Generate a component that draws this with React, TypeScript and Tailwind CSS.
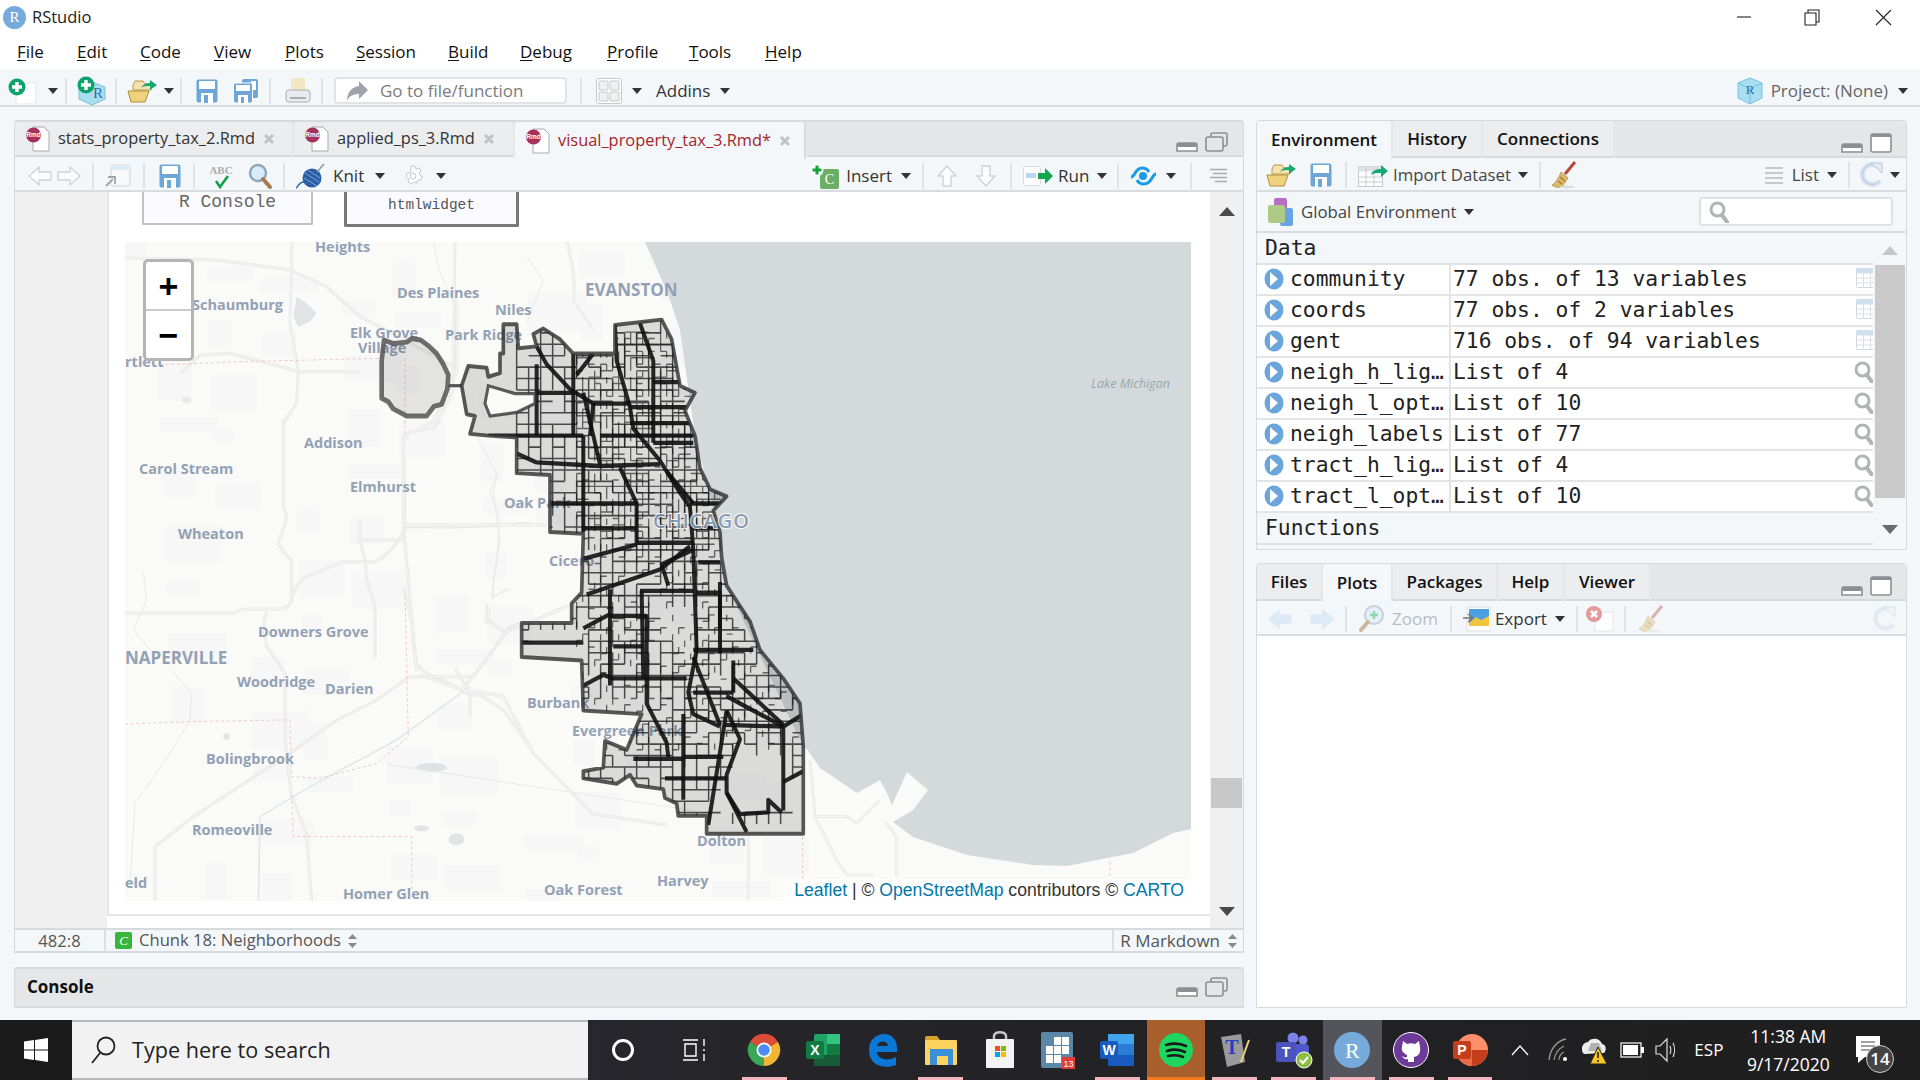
import { Fragment, type ReactNode } from "react";

const menus = [
  ["F", "ile", "w-[60px]"],
  ["E", "dit", "w-[63px]"],
  ["C", "ode", "w-[74px]"],
  ["V", "iew", "w-[71px]"],
  ["P", "lots", "w-[71px]"],
  ["S", "ession", "w-[92px]"],
  ["B", "uild", "w-[72px]"],
  ["D", "ebug", "w-[87px]"],
  ["P", "rofile", "w-[82px]"],
  ["T", "ools", "w-[76px]"],
  ["H", "elp", "w-[60px]"],
];

const envRows = [
  ["community", "77 obs. of 13 variables", "grid"],
  ["coords", "77 obs. of 2 variables", "grid"],
  ["gent", "716 obs. of 94 variables", "grid"],
  ["neigh_h_lig…", "List of 4", "find"],
  ["neigh_l_opt…", "List of 10", "find"],
  ["neigh_labels", "List of 77", "find"],
  ["tract_h_lig…", "List of 4", "find"],
  ["tract_l_opt…", "List of 10", "find"],
];

const Caret = ({ className = "" }: { className?: string }) => (
  <svg width="10" height="6" viewBox="0 0 10 6" className={className}>
    <path d="M0 0h10L5 6z" fill="#333" />
  </svg>
);

const Sep = ({ className = "" }: { className?: string }) => <div className={`w-[2px] h-[26px] bg-[#dfe3e6] ${className}`} />;

const Save = ({ className = "" }: { className?: string }) => (
  <svg width="22" height="24" viewBox="0 0 22 24" className={className}>
    <rect x="0.5" y="0.5" width="21" height="23" rx="2" fill="#6ea6d8" />
    <rect x="3" y="2" width="16" height="8" fill="#fff" />
    <rect x="5" y="14" width="12" height="10" fill="#fff" />
    <rect x="8" y="16" width="4" height="8" fill="#6ea6d8" />
  </svg>
);

const SaveAll = () => (
  <svg width="26" height="26" viewBox="0 0 26 26">
    <rect x="9" y="1" width="16" height="19" rx="2" fill="#6ea6d8" />
    <rect x="18" y="3" width="5" height="9" fill="#fff" />
    <rect x="0.5" y="5" width="19" height="20" rx="2" fill="#6ea6d8" stroke="#fff" />
    <rect x="3" y="7" width="14" height="6" fill="#fff" />
    <rect x="5" y="17" width="10" height="8" fill="#fff" />
    <rect x="8" y="19" width="3" height="6" fill="#6ea6d8" />
  </svg>
);

const Folder = ({ className = "" }: { className?: string }) => (
  <svg width="32" height="24" viewBox="0 0 32 24" className={className}>
    <path d="M6 6l2-4h8l2 3h6v6H6z" fill="#f4e3ac" stroke="#b69a4c" />
    <path d="M1 12h21l-4 11H4z" fill="#f0d27d" stroke="#b08d3a" />
    <path d="M14 9c2-4 6-5 9-5V1l7 5-7 5V7c-4 0-7 0-9 2z" fill="#19a974" />
  </svg>
);

const Broom = ({ dim = false }: { dim?: boolean }) => (
  <svg width="26" height="28" viewBox="0 0 26 28" opacity={dim ? 0.4 : 1}>
    <path d="M24 1L14 13" stroke="#b5483a" strokeWidth="3" />
    <path d="M10 11l7 6-6 9c-4 1-8 0-10-2 4-2 7-8 9-13z" fill="#dcb96a" stroke="#ad8b3f" strokeWidth="0.7" />
    <path d="M9 16l5 4M7 20l4 3" stroke="#a67c2c" strokeWidth="1.4" />
    <ellipse cx="16" cy="26" rx="8" ry="1.4" fill="#ddd" />
  </svg>
);

const Refresh = ({ dim = false }: { dim?: boolean }) => (
  <svg width="23" height="26" viewBox="0 0 23 26" opacity={dim ? 0.45 : 1}>
    <path d="M19 5A10 10 0 1 0 20 19" fill="none" stroke="#d6e2f1" strokeWidth="5" />
    <path d="M19 5A10 10 0 1 0 20 19" fill="none" stroke="#b7c9de" strokeWidth="1" />
    <path d="M11 1h11v10z" fill="#e4edf7" stroke="#b7c9de" />
  </svg>
);

const PaneIcons = ({ restore = false }: { restore?: boolean }) => (
  <div className="flex items-end gap-[7px]">
    <svg width="22" height="10" viewBox="0 0 22 10">
      <path d="M3 1h16a2 2 0 0 1 2 2v6H1V3a2 2 0 0 1 2-2z" fill="#fff" stroke="#8b8f93" strokeWidth="1.6" />
      <rect x="1" y="1" width="20" height="4" rx="2" fill="#8b8f93" />
    </svg>
    {restore ? (
      <svg width="23" height="20" viewBox="0 0 23 20">
        <rect x="6" y="1" width="16" height="13" rx="2" fill="none" stroke="#8b8f93" strokeWidth="1.6" />
        <rect x="1" y="5" width="17" height="14" rx="2" fill="#e4e6e8" stroke="#8b8f93" strokeWidth="1.6" />
      </svg>
    ) : (
      <svg width="22" height="20" viewBox="0 0 22 20">
        <rect x="1" y="1" width="20" height="18" rx="2" fill="#fff" stroke="#8b8f93" strokeWidth="1.6" />
        <rect x="1" y="1" width="20" height="3" fill="#8b8f93" />
      </svg>
    )}
  </div>
);

const RmdIcon = () => (
  <svg width="24" height="26" viewBox="0 0 24 26" className="shrink-0">
    <path d="M7 1h11l5 5v19H7z" fill="#fff" stroke="#aaa" />
    <circle cx="7.5" cy="9" r="7.5" fill="#a5315c" />
    <text x="7.5" y="11" fontSize="6.5" fontWeight="700" fill="#fff" textAnchor="middle" fontFamily="Liberation Sans">Rmd</text>
  </svg>
);

const TabClose = () => (
  <svg width="12" height="12" viewBox="0 0 12 12" className="shrink-0">
    <path d="M2 2l8 8M10 2l-8 8" stroke="#bfc3c6" strokeWidth="3" />
  </svg>
);

const ArrowH = ({ left = false, blue = false }: { left?: boolean; blue?: boolean }) => (
  <svg width="24" height="22" viewBox="0 0 24 22">
    <path
      d={left ? "M1 11L11 2v5h12v8H11v5z" : "M23 11L13 2v5H1v8h12v5z"}
      fill={blue ? "#dbeaf6" : "#fbfcfc"}
      stroke={blue ? "#dbeaf6" : "#cfd3d6"}
      strokeWidth="1.4"
    />
  </svg>
);

const ArrowV = ({ down = false }: { down?: boolean }) => (
  <svg width="20" height="22" viewBox="0 0 20 22">
    <path d={down ? "M10 21L1 11h5V1h8v10h5z" : "M10 1L1 11h5v10h8V11h5z"} fill="#fbfcfc" stroke="#cfd3d6" strokeWidth="1.4" />
  </svg>
);

const Search = ({ className = "" }: { className?: string }) => (
  <svg width="24" height="26" viewBox="0 0 24 26" className={className}>
    <circle cx="10" cy="10" r="8" fill="#d9ebfa" stroke="#8fa7ba" strokeWidth="2.5" />
    <path d="M15 16l7 8" stroke="#a87b4f" strokeWidth="4" strokeLinecap="round" />
  </svg>
);

const GreySearch = ({ className = "" }: { className?: string }) => (
  <svg width="20" height="22" viewBox="0 0 20 22" className={className}>
    <circle cx="8.5" cy="8.5" r="6.5" fill="#fff" stroke="#b1b5b8" strokeWidth="3" />
    <path d="M13 14l5 7" stroke="#b1b5b8" strokeWidth="4" strokeLinecap="round" />
  </svg>
);

const GridIcon = () => (
  <svg width="23" height="21" viewBox="0 0 23 21">
    <rect x="0.5" y="0.5" width="21" height="19" rx="1" fill="#fff" stroke="#cfd6dc" />
    <rect x="0.5" y="0.5" width="21" height="5" fill="#cfe0ef" />
    <path d="M0 10h22M0 15h22M7.5 5v15M14.5 5v15" stroke="#dae0e5" />
  </svg>
);

const MainToolbar = () => (
  <div className="h-[38px] shrink-0 flex items-center pt-[7px] bg-[#f4f7f9] border-b-2 border-[#d9dcdf]">
    <svg width="30" height="26" viewBox="0 0 30 26" className="ml-[8px]">
      <rect x="8" y="5" width="20" height="21" fill="#fff" stroke="#e3e5e7" />
      <circle cx="9" cy="9" r="8.5" fill="#0da26b" />
      <path d="M4 9h10M9 4v10" stroke="#fff" strokeWidth="3.4" />
    </svg>
    <Caret className="ml-[10px]" />
    <Sep className="ml-[7px]" />
    <svg width="32" height="30" viewBox="0 0 32 30" className="ml-[9px]">
      <path d="M16 6l13 5v12l-13 6-13-6V11z" fill="#a9ddf0" stroke="#77c2de" />
      <text x="17" y="22" fontSize="15" fill="#2b70a8" fontFamily="Liberation Serif">R</text>
      <circle cx="10" cy="9" r="8.5" fill="#0da26b" />
      <path d="M5 9h10M10 4v10" stroke="#fff" strokeWidth="3.4" />
    </svg>
    <Sep className="ml-[7px]" />
    <Folder className="ml-[10px]" />
    <Caret className="ml-[5px]" />
    <Sep className="ml-[6px]" />
    <Save className="ml-[14px]" />
    <div className="ml-[15px]"><SaveAll /></div>
    <Sep className="ml-[10px]" />
    <svg width="26" height="26" viewBox="0 0 26 26" className="ml-[14px]">
      <rect x="6" y="0" width="14" height="14" fill="#f1e7c3" />
      <rect x="1" y="12" width="24" height="12" rx="3" fill="#e9ecee" stroke="#a9adb0" />
      <rect x="5" y="19" width="16" height="2" fill="#a9adb0" />
    </svg>
    <Sep className="ml-[10px]" />
    <div className="ml-[11px] w-[233px] h-[27px] bg-white border-2 border-[#e1e4e6] rounded-[4px] flex items-center">
      <svg width="22" height="22" viewBox="0 0 22 22" className="ml-[10px]">
        <path d="M13 1l9 9-9 9v-5C7 14 3 16 1 21 1 12 6 7 13 6z" fill="#9ea3ad" />
      </svg>
      <span className="ml-[12px] text-[17px] text-[#7b7b7b]">Go to file/function</span>
    </div>
    <Sep className="ml-[13px]" />
    <svg width="26" height="26" viewBox="0 0 26 26" className="ml-[14px]">
      <rect x="0.5" y="0.5" width="25" height="25" rx="2" fill="#fff" stroke="#c5c9cc" />
      <rect x="3" y="3" width="9" height="9" rx="1" fill="#eef0f1" stroke="#c5c9cc" />
      <rect x="14" y="3" width="9" height="9" rx="1" fill="#eef0f1" stroke="#c5c9cc" />
      <rect x="3" y="14" width="9" height="9" rx="1" fill="#eef0f1" stroke="#c5c9cc" />
      <rect x="14" y="14" width="9" height="9" rx="1" fill="#eef0f1" stroke="#c5c9cc" />
    </svg>
    <Caret className="ml-[10px]" />
    <span className="ml-[14px] text-[17px] text-[#333]">Addins</span>
    <Caret className="ml-[10px]" />
    <div className="ml-auto flex items-center mr-[12px]">
      <svg width="26" height="28" viewBox="0 0 26 28">
        <path d="M13 1l12 5v15l-12 6-12-6V6z" fill="#a9ddf0" stroke="#77c2de" />
        <path d="M1 6l12 6 12-6M13 12v15" stroke="#77c2de" fill="none" />
        <text x="13" y="17" fontSize="13" fill="#2b70a8" textAnchor="middle" fontFamily="Liberation Serif">R</text>
      </svg>
      <span className="ml-[8px] text-[17px] text-[#666]">Project: (None)</span>
      <Caret className="ml-[10px]" />
    </div>
  </div>
);

const editorTabs = [
  { name: "stats_property_tax_2.Rmd", width: "w-[277px]" },
  { name: "applied_ps_3.Rmd", width: "w-[219px]" },
  { name: "visual_property_tax_3.Rmd*", width: "w-[291px]", active: true },
];

const EditorTabs = () => (
  <div className="h-[37px] shrink-0 flex bg-[#e4e6e8] rounded-t-[4px] border-t-2 border-x border-[#d7dadd] relative">
    {editorTabs.map((t) => (
      <div
        key={t.name}
        className={`${t.width} flex items-center pl-[11px] mr-[2px] rounded-t-[3px] ${t.active ? "bg-[#f4f7f9] h-[37px] border-r-2 border-[#d7dadd]" : "bg-[#ebedef] border-b-2 border-[#d7dadd]"}`}
      >
        <RmdIcon />
        <span className={`ml-[8px] text-[16.4px] ${t.active ? "text-[#a4232b]" : "text-[#333]"}`}>{t.name}</span>
        <span className="ml-[8px]"><TabClose /></span>
      </div>
    ))}
    <div className="flex-1 flex justify-end items-end pb-[3px] pr-[15px] border-b-2 border-[#d7dadd]">
      <PaneIcons restore />
    </div>
  </div>
);

const EditorToolbar = () => (
  <div className="h-[35px] shrink-0 flex items-center pt-[4px] bg-[#f4f7f9] border-x border-[#d7dadd] border-b-2 border-b-[#d9dcdf]">
    <div className="ml-[13px]"><ArrowH left /></div>
    <div className="ml-[5px]"><ArrowH /></div>
    <Sep className="ml-[11px]" />
    <svg width="26" height="24" viewBox="0 0 26 24" className="ml-[11px]">
      <rect x="6" y="1" width="19" height="21" rx="2" fill="#f6f8fa" stroke="#d0d4d7" />
      <rect x="6" y="1" width="19" height="5" fill="#e0ebf5" />
      <path d="M1 22l7-7M3 13h7v7" fill="#fff" stroke="#9ea3a7" strokeWidth="1.8" />
    </svg>
    <Sep className="ml-[12px]" />
    <Save className="ml-[14px]" />
    <Sep className="ml-[12px]" />
    <svg width="28" height="26" viewBox="0 0 28 26" className="ml-[12px]">
      <text x="14" y="11" fontSize="11" fontWeight="700" textAnchor="middle" fill="#a9adb0" fontFamily="Liberation Serif">ABC</text>
      <path d="M9 18l4 6 8-11" fill="none" stroke="#14a04a" strokeWidth="2.6" />
    </svg>
    <Search className="ml-[13px]" />
    <Sep className="ml-[11px]" />
    <svg width="32" height="26" viewBox="0 0 32 26" className="ml-[10px]">
      <circle cx="17" cy="15" r="9.5" fill="#2a5fa6" />
      <path d="M10 10l14 9M9 15l13 8M13 7l12 8" stroke="#7fa6d9" strokeWidth="1" />
      <path d="M22 9l7-8" stroke="#999" strokeWidth="1.6" />
      <path d="M9 19c-6 0-6 6-8 6" fill="none" stroke="#2a5fa6" strokeWidth="1.3" />
    </svg>
    <span className="ml-[6px] text-[17px] text-[#333]">Knit</span>
    <Caret className="ml-[11px]" />
    <svg width="22" height="22" viewBox="0 0 22 22" className="ml-[17px]">
      <path d="M9 1h4l1 3 3-1 2 3-2 3 3 2-1 4h-3l-1 3-3-1-3 2-3-2 1-3-3-2 1-4h3l1-3z" fill="#fff" stroke="#c4c8cb" />
      <circle cx="11" cy="11" r="3" fill="#fff" stroke="#c4c8cb" />
    </svg>
    <Caret className="ml-[12px]" />
    <svg width="30" height="26" viewBox="0 0 30 26" className="ml-[364px]">
      <rect x="10" y="6" width="19" height="20" rx="2" fill="#6cae64" />
      <text x="19.5" y="21" fontSize="14" fill="#fff" textAnchor="middle" fontFamily="Liberation Serif">C</text>
      <circle cx="7" cy="7" r="6.5" fill="#fff" />
      <path d="M2.5 7h9M7 2.5v9" stroke="#13a538" strokeWidth="3" />
    </svg>
    <span className="ml-[6px] text-[17px] text-[#333]">Insert</span>
    <Caret className="ml-[9px]" />
    <Sep className="ml-[11px]" />
    <div className="ml-[13px]"><ArrowV /></div>
    <div className="ml-[19px]"><ArrowV down /></div>
    <Sep className="ml-[14px]" />
    <svg width="30" height="22" viewBox="0 0 30 22" className="ml-[11px]">
      <rect x="0.5" y="1.5" width="17" height="19" rx="2" fill="#fff" stroke="#d5d9dc" />
      <rect x="3" y="8" width="10" height="5" fill="#bcd5f2" />
      <path d="M15 8h7V3l8 8-8 8v-5h-7z" fill="#14a651" />
    </svg>
    <span className="ml-[5px] text-[17px] text-[#333]">Run</span>
    <Caret className="ml-[8px]" />
    <Sep className="ml-[10px]" />
    <svg width="27" height="22" viewBox="0 0 27 22" className="ml-[11px]">
      <path d="M1 12c4 0 4-9 11-9 4 0 6 2 7 4M26 9c-4 0-4 10-12 10-4 0-6-2-7-4" fill="none" stroke="#1a9be8" strokeWidth="3" />
      <circle cx="13" cy="11" r="4" fill="#1a9be8" />
    </svg>
    <Caret className="ml-[9px]" />
    <Sep className="ml-[14px]" />
    <svg width="19" height="16" viewBox="0 0 19 16" className="ml-[17px]">
      <path d="M1 1.5h17M4 5.500h14M1 9.500h17M6 13.500h12" stroke="#a9adb0" strokeWidth="1.3" />
    </svg>
  </div>
);

const pts = (list: number[][]) => list.map((p) => p.join(",")).join(" ");

const city = [
  [765, 70], [905, 55], [935, 110], [960, 240], [1005, 260], [975, 310], [1005, 380], [1020, 470], [1050, 530], [1100, 550], [1060, 590], [1080, 650], [1085, 720], [1100, 800], [1170, 900], [1200, 980], [1270, 1060], [1320, 1130], [1330, 1250], [1330, 1495], [1040, 1495], [1040, 1445], [955, 1445], [950, 1410], [915, 1395], [910, 1370], [830, 1360], [810, 1330], [770, 1355], [670, 1340], [670, 1320], [730, 1310], [735, 1235], [800, 1260], [845, 1160], [670, 1150], [665, 1010], [485, 1000], [485, 905], [635, 905], [635, 850], [665, 820], [670, 655], [570, 650], [570, 490], [470, 485], [470, 385], [385, 380], [330, 375], [345, 325], [320, 320], [305, 240], [325, 185], [380, 190], [385, 215], [420, 205], [420, 150], [430, 150], [430, 68], [470, 68], [475, 135], [530, 130], [520, 95], [550, 80], [600, 110], [640, 150], [720, 150], [765, 150],
];

const notch = [[385, 240], [465, 262], [525, 262], [525, 290], [470, 315], [390, 325], [375, 290]];

const ohare = [[65, 170], [72, 112], [100, 122], [140, 118], [155, 108], [182, 112], [205, 128], [230, 150], [250, 180], [265, 210], [262, 250], [245, 292], [222, 298], [200, 325], [140, 325], [100, 305], [85, 285], [65, 275]];

const hash = (a: number, b: number) => (a * 73 + b * 151 + a * b * 7) % 11;

const sparse = [
  [1110, 1260, 1270, 1430],
  [1060, 1340, 1105, 1500],
  [1030, 1440, 1330, 1500],
  [1285, 1330, 1330, 1500],
  [880, 830, 985, 925],
  [670, 1090, 860, 1150],
  [480, 905, 670, 1000],
];

const isSparse = (x: number, y: number) => sparse.some(([l, t, r, b]) => x >= l && x <= r && y >= t && y <= b);

// street grid: regular blocks with pseudo random gaps, denser on the north side
const buildGrid = () => {
  let coarse = "";
  let fine = "";
  for (let i = 0; i < 25; i++) {
    for (let j = 0; j < 46; j++) {
      const x = 470 + i * 36;
      const y = 60 + j * 32;
      if (!isSparse(x, y) && hash(i, j) % 4 !== 0) coarse += `M${x} ${y}v32`;
      if (!isSparse(x, y) && hash(j, i) % 5 !== 0) coarse += `M${x} ${y}h36`;
    }
  }
  for (let i = 0; i < 42; i++) {
    for (let j = 0; j < 66; j++) {
      const x = 650 + i * 18;
      const y = 90 + j * 18;
      if (y > 700 && (j + i) % 3 !== 0) continue;
      if (hash(i, j) % 2 === 0) fine += `M${x} ${y}v18`;
      if (hash(j, i) % 3 === 0) fine += `M${x} ${y}h18`;
    }
  }
  return { coarse, fine };
};

const grid = buildGrid();

const cityLines = [
  "M765 70L770 170L810 300L820 360L900 450L960 540L990 580L1000 700L1010 980L985 1100L1000 1160L1080 1195",
  "M840 65L880 170V400",
  "M530 130L560 180L630 250L700 290H810",
  "M530 180V380",
  "M385 380H670",
  "M470 430L530 455L720 465L900 460",
  "M670 260L720 460",
  "M670 380V650",
  "M570 570H830V680",
  "M670 640H830",
  "M830 680H1000",
  "M670 725L830 685",
  "M680 825L900 755L990 690",
  "M670 920L750 880",
  "M750 810V1080",
  "M750 885H860",
  "M860 880V1130L920 1240L925 1280",
  "M670 1080L730 1050L760 1060H980",
  "M845 815L850 1060",
  "M480 960H670",
  "M1000 815H840",
  "M1000 1000L1080 1190",
  "M1100 1110L1270 1195",
  "M1120 1060L1270 1190",
  "M1330 1160L1270 1195V1430",
  "M1270 1195L1090 1190",
  "M1100 1150L1140 1230L1100 1330V1380L1160 1490",
  "M1100 1150L1045 1470",
  "M1100 1380L1140 1440L1225 1435V1400L1265 1435",
  "M1270 1350L1330 1320",
  "M820 1285H970",
  "M970 1160V1400",
  "M915 1340H1100",
  "M1010 820H1080V920",
  "M1000 980H1180",
  "M1000 700L905 740L925 800",
  "M640 150V380",
  "M880 230H960",
  "M700 290L690 380",
  "M810 300H980",
  "M810 345H990",
  "M880 400H1000",
  "M720 380H1000",
  "M780 470L830 570",
  "M920 480L1000 570",
  "M990 570H1100",
  "M1000 640H1075",
  "M1015 735H1080",
  "M1080 790V990",
  "M1120 1010V1100",
  "M1000 1100H1120",
  "M970 1280H1090",
  "M760 970H850",
  "M530 260H640",
  "M700 150L650 210",
];

const westRoads = [
  "M520 0V260Q535 290 525 310L505 370Q520 400 545 420V540Q540 565 510 567H400L370 580H45",
  "M545 540Q555 490 590 470L700 425H790Q830 420 885 330L880 50Q890 35 970 25L990 0",
  "M880 320H960Q985 325 1260 310",
  "M740 360H885",
  "M750 300V360L765 420L770 480L795 560V715",
  "M470 575Q455 620 470 680L525 760V960L545 1130L590 1240L605 1445",
  "M880 500L905 600L915 720Q930 760 1000 780L1080 825H1110L1180 870L1260 980",
  "M135 1445V1280L250 1190L540 1000L680 900L800 840L900 770H1090L1200 620L1240 610",
  "M1080 825V890M1035 745L1080 825",
  "M1135 560V600L1180 635L1230 620",
];

const northRoads = [
  "M75 205L350 210L570 240L680 290L780 380L860 420L1060 530",
  "M575 155V240L570 400L595 540L590 640L550 700",
  "M240 550L300 495L390 490L600 545H780",
  "M1065 155L1060 530V600L1000 720",
  "M1400 155Q1430 260 1420 330L1480 420",
];

const eastRoads = [
  "M290 0V200L220 340L140 380L130 400V630L170 1040",
  "M135 630H560",
  "M180 1050L300 1090L430 1110L520 1270L700 1440L920 1470",
  "M380 850V900L440 930L640 850",
  "M440 930L300 1100",
];

const southRoads = [
  "M330 600L345 770L410 900L440 945H520",
  "M340 770H440L470 790L540 720",
  "M555 785L590 830V950",
  "M145 830V1020",
];

const patches = Array.from({ length: 90 }, (_, i) => ({
  x: 125 + ((i * 137) % 640),
  y: 242 + ((i * 89) % 650),
  w: 22 + (i % 4) * 12,
  h: 16 + (i % 3) * 11,
}));

const labels: [string, number, number, number?][] = [
  ["Heights", 315, 252], ["Schaumburg", 192, 310], ["Des Plaines", 397, 298], ["Niles", 495, 315],
  ["EVANSTON", 585, 296, 17], ["Elk Grove", 350, 338], ["Village", 358, 353], ["Park Ridge", 445, 340],
  ["rtlett", 125, 367], ["Addison", 304, 448], ["Carol Stream", 139, 474], ["Elmhurst", 350, 492],
  ["Oak Park", 504, 508], ["Wheaton", 178, 539], ["Cicero", 549, 566], ["Downers Grove", 258, 637],
  ["NAPERVILLE", 125, 664, 17], ["Woodridge", 237, 687], ["Darien", 325, 694], ["Burbank", 527, 708],
  ["Evergreen Park", 572, 736], ["Bolingbrook", 206, 764], ["Romeoville", 192, 835], ["Dolton", 697, 846],
  ["Homer Glen", 343, 899], ["Oak Forest", 544, 895], ["Harvey", 657, 886], ["eld", 125, 888],
];

const MapView = () => (
  <div className="ml-[16px] mt-[16px] w-[1066px] h-[659px] relative overflow-hidden shrink-0">
    <svg width="1066" height="659" viewBox="125 242 1066 659" className="block">
      <rect x="125" y="242" width="1066" height="659" fill="#fafaf9" />
      {patches.map((p, i) => (
        <rect key={i} x={p.x} y={p.y} width={p.w} height={p.h} fill="#f6f7f6" />
      ))}
      <polygon
        fill="#d4d9dc"
        points="645,242 668,294 680,330 695,436 720,532 727,586 803,746 806,748 820,768 857,793 880,780 887,793 892,805 907,772 922,785 928,790 913,810 893,822 913,837 967,855 1033,865 1067,866 1133,853 1173,833 1192,829 1192,242"
      />
      <g transform="translate(110 420) scale(.3333)" fill="none">
        {westRoads.map((d) => (
          <Fragment key={d}>
            <path d={d} stroke="#e7e8e7" strokeWidth="9" />
            <path d={d} stroke="#f7f7f6" strokeWidth="3" />
          </Fragment>
        ))}
        <path d="M445 1445L450 1190L600 1100L860 960L1080 800" stroke="#e2e7ea" strokeWidth="5" />
        <path d="M1100 50L1165 170L1140 210L1170 300L1160 420L1145 535L1190 505M100 460L110 540L70 630L130 700M185 750L245 820L240 900L180 1000L75 1150L60 1400" stroke="#e4e9eb" strokeWidth="3" />
        <path d="M45 912L240 905L520 900H540L545 1070L630 1075L800 1030L895 950L885 520M885 0V50M545 1125L550 1250H905V1410" stroke="#ecc9cc" strokeWidth="3" strokeDasharray="9 8" />
        <ellipse cx="965" cy="1042" rx="46" ry="13" fill="#dfe2e4" />
        <ellipse cx="1040" cy="1258" rx="24" ry="18" fill="#e1e4e5" />
        <ellipse cx="350" cy="950" rx="10" ry="10" fill="#e1e4e5" />
        <ellipse cx="935" cy="1225" rx="22" ry="9" fill="#e1e4e5" />
      </g>
      <g transform="translate(100 190) scale(.3333)" fill="none">
        {northRoads.map((d) => (
          <Fragment key={d}>
            <path d={d} stroke="#e7e8e7" strokeWidth="9" />
            <path d={d} stroke="#f7f7f6" strokeWidth="3" />
          </Fragment>
        ))}
        <path d="M180 525L420 515L850 505M915 505V700" stroke="#ecc9cc" strokeWidth="3" strokeDasharray="9 8" />
        <path d="M1000 155L1020 250L1060 330M1280 200L1330 270L1280 400" stroke="#e4e9eb" strokeWidth="3" />
        <path d="M590 320l30 20 30 30-20 25-35 15-15-30z" fill="#e1e4e6" />
        <ellipse cx="260" cy="630" rx="14" ry="10" fill="#e7e9ea" />
      </g>
      <g transform="translate(360 300) scale(.3333 .357)" fill="none">
        {eastRoads.map((d) => (
          <Fragment key={d}>
            <path d={d} stroke="#e7e8e7" strokeWidth="9" />
            <path d={d} stroke="#f7f7f6" strokeWidth="3" />
          </Fragment>
        ))}
        <path d="M410 480L400 540L420 680L400 780V830L450 810" stroke="#e4e9eb" strokeWidth="3" />
        <path d="M80 1300L500 1360L1000 1430" stroke="#e7e9e9" strokeWidth="3" />
      </g>
      <g transform="translate(700 560) scale(.3333)" fill="none">
        {southRoads.map((d) => (
          <Fragment key={d}>
            <path d={d} stroke="#e7e8e7" strokeWidth="8" />
            <path d={d} stroke="#f7f7f6" strokeWidth="3" />
          </Fragment>
        ))}
        <path d="M308 830V960M1230 905V950" stroke="#ecc9cc" strokeWidth="3" strokeDasharray="9 8" />
      </g>
      {labels.map(([t, x, y, s]) => (
        <text
          key={t}
          x={x}
          y={y}
          fontSize={s ?? 14.5}
          fontWeight="700"
          fontFamily="Open Sans, sans-serif"
          fill="#93a1b4"
        >
          {t}
        </text>
      ))}
      <text x="1091" y="388" fontSize="12.5" fontStyle="italic" fontFamily="Open Sans, sans-serif" fill="#9aa6ae">Lake Michigan</text>
      <g transform="translate(360 300) scale(.3333 .357)">
        <clipPath id="city-clip">
          <polygon points={pts(city)} />
        </clipPath>
        <polygon points={pts(city)} fill="#000" fillOpacity="0.12" />
        <polygon points={pts(notch)} fill="#fafaf9" />
        <polygon points={pts(ohare)} fill="#000" fillOpacity="0.09" stroke="#555" strokeOpacity="0.85" strokeWidth="14" strokeLinejoin="round" />
        <path d="M265 240H305" stroke="#555" strokeWidth="9" />
        <g clipPath="url(#city-clip)" fill="none" stroke="#111" strokeOpacity="0.72">
          <path d={grid.coarse} strokeWidth="4.5" />
          <path d={grid.fine} strokeWidth="4" strokeOpacity="0.6" />
          {cityLines.map((d) => (
            <path key={d} d={d} strokeWidth="12" strokeOpacity="0.9" strokeLinejoin="round" />
          ))}
        </g>
        <polygon points={pts(notch)} fill="#fafaf9" stroke="#333" strokeWidth="9" strokeOpacity="0.8" />
        <polygon points={pts(city)} fill="none" stroke="#333" strokeOpacity="0.82" strokeWidth="11" strokeLinejoin="round" />
      </g>
      <text x="653" y="528" fontSize="20" fontWeight="600" letterSpacing="1" fontFamily="Open Sans, sans-serif" fill="#8094ac" stroke="#fff" strokeWidth="2" paintOrder="stroke" opacity="0.85">CHICAGO</text>
    </svg>
    <div className="absolute left-[18px] top-[17px] w-[51px] h-[102px] border-[3px] border-[#b4b4b4] rounded-[5px] bg-white flex flex-col font-['Liberation_Sans',sans-serif] text-black">
      <div className="h-[49px] border-b-2 border-[#ccc] flex items-center justify-center text-[34px] font-bold leading-none">+</div>
      <div className="flex-1 flex items-center justify-center text-[34px] font-bold leading-none">−</div>
    </div>
    <div className="absolute right-0 bottom-0 h-[22px] pl-[9px] pr-[7px] bg-white/85 text-[17.6px] leading-[22px] text-[#333] font-['Liberation_Sans',sans-serif] whitespace-nowrap">
      <span className="text-[#0078a8]">Leaflet</span> | © <span className="text-[#0078a8]">OpenStreetMap</span> contributors © <span className="text-[#0078a8]">CARTO</span>
    </div>
  </div>
);

const EditorBody = () => (
  <div className="flex-1 min-h-0 flex border-x border-[#d7dadd] overflow-hidden">
    <div className="w-[92px] bg-[#f0f0f0] shrink-0" />
    <div className="flex-1 bg-white flex flex-col">
      <div className="flex-1 min-h-0 border-l-2 border-b-2 border-[#e6e6e6] flex flex-col">
        <div className="flex h-[34px] shrink-0 font-['Liberation_Mono',monospace]">
          <div className="ml-[33px] w-[171px] h-[34px] -mt-px border-2 border-t-0 border-[#c2c2c6] rounded-b-[2px] bg-[#fbfbff] text-[18px] text-[#666] text-center leading-[22px]">R Console</div>
          <div className="ml-[31px] w-[175px] h-[35px] border-[3px] border-t-0 border-[#77777c] rounded-b-[2px] bg-[#fbfbff] text-[14.5px] text-[#555] text-center leading-[26px]">htmlwidget</div>
        </div>
        <MapView />
      </div>
      <div className="h-[12px] shrink-0" />
    </div>
    <div className="w-[33px] shrink-0 bg-[#f0f0f0] flex flex-col items-center relative">
      <svg width="16" height="9" viewBox="0 0 16 9" className="mt-[15px]"><path d="M0 9h16L8 0z" fill="#4a4a4a" /></svg>
      <div className="mt-[562px] w-[31px] h-[30px] bg-[#c8c8c8]" />
      <svg width="16" height="9" viewBox="0 0 16 9" className="mt-[99px]"><path d="M0 0h16L8 9z" fill="#4a4a4a" /></svg>
    </div>
  </div>
);

const StatusBar = () => (
  <div className="h-[25px] shrink-0 flex items-center bg-[#f4f7f9] border-x border-y-2 border-[#d7dadd] text-[16.6px] text-[#555]">
    <div className="w-[91px] text-center border-r-2 border-[#dcdfe2] h-full leading-[21px]">482:8</div>
    <span className="ml-[9px] w-[17px] h-[17px] rounded-[2px] bg-[#38b53c] text-white text-[13px] italic flex items-center justify-center font-['Liberation_Serif',serif]">C</span>
    <span className="ml-[7px]">Chunk 18: Neighborhoods</span>
    <svg width="9" height="14" viewBox="0 0 9 14" className="ml-[7px]"><path d="M4.500 0L9 5H0zM4.500 14L0 9h9z" fill="#8a8a8a" /></svg>
    <div className="ml-auto h-full border-l-2 border-[#dcdfe2] flex items-center pl-[6px] pr-[6px]">
      <span className="text-[17px]">R Markdown</span>
      <svg width="9" height="14" viewBox="0 0 9 14" className="ml-[8px]"><path d="M4.500 0L9 5H0zM4.500 14L0 9h9z" fill="#8a8a8a" /></svg>
    </div>
  </div>
);

const EnvPane = () => (
  <div className="h-[430px] flex flex-col border border-[#d7dadd] rounded-t-[4px] overflow-hidden">
    <div className="h-[37px] shrink-0 flex bg-[#e4e6e8] relative">
      {[
        ["Environment", "w-[134px]", true],
        ["History", "w-[88px]", false],
        ["Connections", "w-[130px]", false],
      ].map(([t, w, a]) => (
        <div
          key={t as string}
          className={`${w} mr-[2px] flex items-center justify-center text-[17px] font-semibold text-[#111] ${a ? "bg-[#f4f7f9]" : "bg-[#ebedef] border-b-2 border-[#d7dadd]"}`}
        >
          {t}
        </div>
      ))}
      <div className="flex-1 flex justify-end items-end pb-[3px] pr-[14px] border-b-2 border-[#d7dadd]">
        <PaneIcons />
      </div>
    </div>
    <div className="h-[34px] shrink-0 flex items-center pt-[2px] bg-[#f4f7f9] border-b-2 border-[#d9dcdf]">
      <Folder className="ml-[9px]" />
      <Save className="ml-[12px]" />
      <Sep className="ml-[13px]" />
      <svg width="30" height="24" viewBox="0 0 30 24" className="ml-[11px]">
        <rect x="0.5" y="3.500" width="24" height="20" fill="#fff" stroke="#c6cacd" />
        <rect x="0.5" y="3.500" width="24" height="5" fill="#dfe2e4" />
        <path d="M0 14h25M0 19h25M8 4v20M16 4v20" stroke="#c6cacd" />
        <path d="M13 12c1-5 6-6 10-6V2l7 6-7 6v-4c-4 0-7 0-10 2z" fill="#19a974" />
      </svg>
      <span className="ml-[5px] text-[16.8px] text-[#444]">Import Dataset</span>
      <Caret className="ml-[7px]" />
      <Sep className="ml-[11px]" />
      <div className="ml-[10px]"><Broom /></div>
      <svg width="18" height="18" viewBox="0 0 18 18" className="ml-auto">
        <path d="M0 2h18M0 7h18M0 12h18M0 17h18" stroke="#b6babd" strokeWidth="1.7" />
      </svg>
      <span className="ml-[9px] text-[17px] text-[#444]">List</span>
      <Caret className="ml-[8px]" />
      <Sep className="ml-[11px]" />
      <div className="ml-[10px]"><Refresh /></div>
      <Caret className="ml-[7px] mr-[6px]" />
    </div>
    <div className="h-[41px] shrink-0 flex items-center bg-[#f4f7f9] border-b-2 border-[#d9dcdf]">
      <svg width="26" height="30" viewBox="0 0 26 30" className="ml-[11px]">
        <rect x="6" y="1" width="13" height="19" rx="2" fill="#b66fc5" />
        <rect x="12" y="11" width="13" height="18" rx="2" fill="#6aa2e3" />
        <rect x="0" y="8" width="17" height="18" rx="2" fill="#aecb86" />
      </svg>
      <span className="ml-[7px] text-[16.8px] text-[#444]">Global Environment</span>
      <Caret className="ml-[8px]" />
      <div className="ml-auto mr-[13px] w-[194px] h-[29px] bg-white border-2 border-[#dfe2e5] rounded-[3px] flex items-center pl-[8px]">
        <GreySearch />
      </div>
    </div>
    <div className="flex-1 min-h-0 relative overflow-hidden font-['DejaVu_Sans_Mono',monospace] text-[21.3px] text-[#222]">
      <div className="h-[32px] bg-[#f4f7f9] border-b-2 border-[#dfe2e4] pl-[8px] leading-[30px]">Data</div>
      {envRows.map(([name, value, icon]) => (
        <div key={name} className="h-[31px] pb-[2px] flex items-center bg-white border-b-2 border-[#e2e4e6]">
          <div className="w-[194px] h-[31px] -mb-[2px] flex items-center pb-[2px] border-r-2 border-[#e2e4e6] shrink-0">
            <svg width="20" height="22" viewBox="0 0 20 22" className="ml-[7px] shrink-0">
              <ellipse cx="10" cy="11" rx="9.500" ry="10.500" fill="#6aa6dc" />
              <path d="M6 4l8 7-8 7z" fill="#fff" />
            </svg>
            <span className="ml-[6px] whitespace-nowrap">{name}</span>
          </div>
          <span className="ml-[2px] whitespace-nowrap">{value}</span>
          {icon === "grid" ? (
            <div className="ml-auto mr-[27px]"><GridIcon /></div>
          ) : (
            <GreySearch className="ml-auto mr-[32px]" />
          )}
        </div>
      ))}
      <div className="h-[32px] bg-[#f4f7f9] border-b-2 border-[#dfe2e4] pl-[8px] leading-[30px]">Functions</div>
      <div className="absolute right-0 top-0 bottom-0 w-[33px] bg-[#f4f6f8] flex flex-col items-center">
        <svg width="16" height="9" viewBox="0 0 16 9" className="mt-[13px]"><path d="M0 9h16L8 0z" fill="#c4c6c8" /></svg>
        <div className="mt-[10px] w-[30px] h-[233px] bg-[#c9c9c9]" />
        <svg width="16" height="9" viewBox="0 0 16 9" className="mt-[27px]"><path d="M0 0h16L8 9z" fill="#6a6a6a" /></svg>
      </div>
    </div>
  </div>
);

const filesTabs: [string, string, boolean][] = [
  ["Files", "w-[64px]", false],
  ["Plots", "w-[68px]", true],
  ["Packages", "w-[103px]", false],
  ["Help", "w-[65px]", false],
  ["Viewer", "w-[84px]", false],
];

const FilesPane = () => (
  <div className="flex-1 flex flex-col border border-[#d7dadd] rounded-t-[4px] overflow-hidden">
    <div className="h-[37px] shrink-0 flex bg-[#e4e6e8]">
      {filesTabs.map(([t, w, a]) => (
        <div
          key={t}
          className={`${w} mr-[2px] flex items-center justify-center text-[17px] font-semibold text-[#111] ${a ? "bg-[#f4f7f9]" : "bg-[#ebedef] border-b-2 border-[#d7dadd]"}`}
        >
          {t}
        </div>
      ))}
      <div className="flex-1 flex justify-end items-end pb-[3px] pr-[14px] border-b-2 border-[#d7dadd]">
        <PaneIcons />
      </div>
    </div>
    <div className="h-[35px] shrink-0 flex items-center pt-[2px] bg-[#f4f7f9] border-b-2 border-[#d9dcdf]">
      <div className="ml-[11px]"><ArrowH left blue /></div>
      <div className="ml-[18px]"><ArrowH blue /></div>
      <Sep className="ml-[11px]" />
      <svg width="26" height="28" viewBox="0 0 26 28" className="ml-[12px]" opacity="0.6">
        <circle cx="15" cy="10" r="9" fill="#dbeaf6" stroke="#a9b6c0" strokeWidth="2" />
        <path d="M11 10h8M15 6v8" stroke="#4fbf80" strokeWidth="2.400" />
        <path d="M9 17l-7 8" stroke="#b88a5c" strokeWidth="4" strokeLinecap="round" />
      </svg>
      <span className="ml-[7px] text-[17px] text-[#b9bcbf]">Zoom</span>
      <Sep className="ml-[12px]" />
      <svg width="28" height="26" viewBox="0 0 28 26" className="ml-[11px]">
        <rect x="4" y="1" width="24" height="24" fill="#fff" stroke="#ddd" />
        <rect x="6" y="3" width="20" height="14" fill="#4c9fe0" />
        <path d="M6 17l7-6 5 3 8-4v10H6z" fill="#f0c63e" />
        <path d="M0 12h9M5 8l5 4-5 4" fill="none" stroke="#777" strokeWidth="1.6" />
      </svg>
      <span className="ml-[4px] text-[17px] text-[#333]">Export</span>
      <Caret className="ml-[8px]" />
      <Sep className="ml-[11px]" />
      <svg width="28" height="26" viewBox="0 0 28 26" className="ml-[8px]">
        <rect x="9" y="6" width="18" height="19" fill="#fff" stroke="#e4e6e8" />
        <circle cx="8" cy="8" r="8" fill="#e49a9a" />
        <path d="M5 5l6 6M11 5l-6 6" stroke="#fff" strokeWidth="2.500" />
      </svg>
      <Sep className="ml-[10px]" />
      <div className="ml-[12px]"><Broom dim /></div>
      <div className="ml-auto mr-[10px]"><Refresh dim /></div>
    </div>
    <div className="flex-1 bg-white" />
  </div>
);

const Tile = ({ children, active, underline, tint }: { children: ReactNode; active?: boolean; underline?: boolean; tint?: boolean }) => (
  <div className={`w-[58.800px] h-full shrink-0 flex items-center justify-center relative ${active ? "bg-[#a85f2c]" : tint ? "bg-[#54555c]" : ""}`}>
    {children}
    {active && <div className="absolute left-0 right-0 bottom-0 h-[3px] bg-[#f47a20]" />}
    {underline && <div className="absolute left-[7px] right-[7px] bottom-0 h-[3px] bg-[#f4b6be]" />}
  </div>
);

const Taskbar = () => (
  <div className="h-[60px] shrink-0 flex items-center bg-linear-to-r from-[#2a2a32] to-[#1e1e1e] text-white">
    <div className="w-[72px] h-full bg-[#1a1a1a] flex items-center justify-center">
      <svg width="24" height="24" viewBox="0 0 24 24"><path d="M0 3.500l10-1.400v9.400H0zM11 2L24 0v11.500H11zM0 12.500h10v9.400L0 20.500zM11 12.500h13V24L11 22z" fill="#fff" /></svg>
    </div>
    <div className="w-[516px] h-full bg-[#f2f2f2] border-y-[2px] border-[#b8b8b8] flex items-center">
      <svg width="26" height="28" viewBox="0 0 26 28" className="ml-[18px]">
        <circle cx="16" cy="10" r="8.500" fill="none" stroke="#222" strokeWidth="1.800" />
        <path d="M10 17L2 27" stroke="#222" strokeWidth="1.800" />
      </svg>
      <span className="ml-[16px] text-[21.6px] text-[#222]">Type here to search</span>
    </div>
    <div className="w-[70px] flex justify-center">
      <svg width="24" height="24" viewBox="0 0 24 24"><circle cx="12" cy="12" r="9.500" fill="none" stroke="#fff" strokeWidth="3" /></svg>
    </div>
    <div className="w-[72px] flex justify-center">
      <svg width="24" height="24" viewBox="0 0 24 24" fill="none" stroke="#fff" strokeWidth="1.400">
        <path d="M1 2h15M1 22h15M3 6h11v12H3zM22 1v7M22 11v2M22 16v7" />
      </svg>
    </div>
    <div className="w-[5px]" />
    <Tile underline>
      <svg width="34" height="34" viewBox="0 0 34 34">
        <path d="M17 17L31 9A16 16 0 0 0 3 9z" fill="#dd4b39" />
        <path d="M17 17L31 9A16 16 0 0 1 17 33z" fill="#f2b632" />
        <path d="M17 17V33A16 16 0 0 1 3 9z" fill="#3aa757" />
        <circle cx="17" cy="17" r="7.500" fill="#fff" />
        <circle cx="17" cy="17" r="5.800" fill="#4c8bf5" />
      </svg>
    </Tile>
    <Tile>
      <svg width="36" height="34" viewBox="0 0 36 34">
        <rect x="9" y="1" width="26" height="32" rx="2" fill="#21a366" />
        <rect x="22" y="1" width="13" height="10" fill="#33c481" />
        <rect x="22" y="11" width="13" height="11" fill="#107c41" />
        <rect x="9" y="22" width="26" height="11" fill="#185c37" />
        <rect x="1" y="8" width="18" height="18" rx="2" fill="#107c41" />
        <text x="10" y="22" fontSize="14" fontWeight="700" fill="#fff" textAnchor="middle" fontFamily="Liberation Sans">X</text>
      </svg>
    </Tile>
    <Tile>
      <svg width="32" height="34" viewBox="0 0 32 34">
        <path d="M3 17C3 6 11 1 18 1c8 0 13 6 13 14v4H11c0 7 11 10 19 5v8c-10 4-27 2-27-15z" fill="#0c78d6" />
        <path d="M11 13h11c0-6-10-6-11 0z" fill="#25272e" />
      </svg>
    </Tile>
    <Tile underline>
      <svg width="36" height="34" viewBox="0 0 36 34">
        <path d="M2 5a2 2 0 0 1 2-2h10l3 4H2z" fill="#d8a22c" />
        <rect x="2" y="7" width="32" height="25" rx="1" fill="#fbd35d" />
        <path d="M7 16h23v16h-5v-9H14v9H7z" fill="#3a8fd6" />
      </svg>
    </Tile>
    <Tile>
      <svg width="30" height="38" viewBox="0 0 30 38">
        <path d="M9 9V5c0-5 12-5 12 0v4" fill="none" stroke="#c6c6c6" strokeWidth="2.500" />
        <rect x="1" y="8" width="28" height="29" rx="1" fill="#f3f3f3" />
        <rect x="10" y="15" width="5" height="5" fill="#f25022" />
        <rect x="16" y="15" width="5" height="5" fill="#7fba00" />
        <rect x="10" y="21" width="5" height="5" fill="#00a4ef" />
        <rect x="16" y="21" width="5" height="5" fill="#ffb900" />
      </svg>
    </Tile>
    <Tile>
      <svg width="36" height="38" viewBox="0 0 36 38">
        <rect x="1" y="1" width="32" height="36" rx="2" fill="#5b87a8" />
        <path d="M14 6h7v8h-7zM22 6h7v8h-7zM6 15h7v8H6zM14 15h7v8h-7zM22 15h7v8h-7zM6 24h7v8H6zM14 24h7v8h-7z" fill="#fff" />
        <rect x="22" y="26" width="13" height="12" fill="#e03b3b" />
        <text x="28.500" y="36" fontSize="9" fill="#fff" textAnchor="middle" fontFamily="Liberation Sans">13</text>
      </svg>
    </Tile>
    <Tile underline>
      <svg width="36" height="34" viewBox="0 0 36 34">
        <rect x="9" y="1" width="26" height="32" rx="2" fill="#2b7cd3" />
        <rect x="9" y="1" width="26" height="10" fill="#41a5ee" />
        <rect x="9" y="22" width="26" height="11" fill="#185abd" />
        <rect x="1" y="8" width="18" height="18" rx="2" fill="#185abd" />
        <text x="10" y="22" fontSize="14" fontWeight="700" fill="#fff" textAnchor="middle" fontFamily="Liberation Sans">W</text>
      </svg>
    </Tile>
    <Tile active>
      <svg width="34" height="34" viewBox="0 0 34 34">
        <circle cx="17" cy="17" r="17" fill="#1ed760" />
        <path d="M7 12c7-2 14-2 20 1M8 18c6-2 12-2 18 1M9 23c5-1 11-1 15 1" fill="none" stroke="#1a1a1a" strokeWidth="2.600" strokeLinecap="round" />
      </svg>
    </Tile>
    <Tile underline>
      <svg width="36" height="36" viewBox="0 0 36 36">
        <path d="M4 5l20-3 4 28-18 5z" fill="#9a9a9a" />
        <text x="15" y="22" fontSize="20" fontWeight="700" fill="#2a3bc4" textAnchor="middle" fontFamily="Liberation Serif">T</text>
        <path d="M32 8L24 30" stroke="#e6d48a" strokeWidth="2" />
      </svg>
    </Tile>
    <Tile underline>
      <svg width="38" height="38" viewBox="0 0 38 38">
        <circle cx="28" cy="9" r="4.500" fill="#7b83eb" />
        <circle cx="18" cy="7" r="5.500" fill="#7b83eb" />
        <rect x="14" y="13" width="20" height="16" rx="4" fill="#5059c9" />
        <rect x="1" y="11" width="20" height="20" rx="2" fill="#4b53bc" />
        <text x="11" y="26" fontSize="14" fontWeight="700" fill="#fff" textAnchor="middle" fontFamily="Liberation Sans">T</text>
        <circle cx="29" cy="29" r="8" fill="#8cbf3f" stroke="#fff" />
        <path d="M25 29l3 3 5-6" fill="none" stroke="#fff" strokeWidth="2" />
      </svg>
    </Tile>
    <Tile tint underline>
      <div className="w-[36px] h-[36px] rounded-full bg-[#75aadb] text-white text-[22px] flex items-center justify-center font-['Liberation_Serif',serif]">R</div>
    </Tile>
    <Tile underline>
      <svg width="36" height="36" viewBox="0 0 36 36">
        <circle cx="18" cy="18" r="17.500" fill="#6e3a98" stroke="#fff" />
        <path d="M10 9l4 3c3-1 5-1 8 0l4-3 1 6c1 5-1 9-6 10v5h-6v-3c-3 1-5-1-6-3 2 1 3 2 5 1v-2c-4-2-6-5-5-8z" fill="#fff" />
      </svg>
    </Tile>
    <Tile underline>
      <svg width="36" height="34" viewBox="0 0 36 34">
        <circle cx="20" cy="17" r="16" fill="#ff8f6b" />
        <path d="M20 17h16a16 16 0 0 1-16 16z" fill="#c43e1c" />
        <path d="M20 17v16A16 16 0 0 1 4 17z" fill="#ed6c47" />
        <rect x="1" y="8" width="18" height="18" rx="2" fill="#c43e1c" />
        <text x="10" y="22" fontSize="14" fontWeight="700" fill="#fff" textAnchor="middle" fontFamily="Liberation Sans">P</text>
      </svg>
    </Tile>
    <svg width="18" height="12" viewBox="0 0 18 12" className="ml-[12px]"><path d="M1 11l8-9 8 9" fill="none" stroke="#fff" strokeWidth="1.300" /></svg>
    <svg width="20" height="24" viewBox="0 0 20 24" className="ml-[19px]" fill="none" stroke="#9a9a9a" strokeWidth="1.300">
      <path d="M1 22C2 12 8 3 18 1M6 22c1-7 4-11 10-14M11 22c0-3 1-6 5-8" />
      <circle cx="17" cy="21" r="2" fill="#fff" stroke="none" />
    </svg>
    <svg width="26" height="30" viewBox="0 0 26 30" className="ml-[14px]">
      <path d="M2 19a7 7 0 0 1 4-12 8 8 0 0 1 14 2c4 0 5 6 2 9z" fill="#ededed" />
      <path d="M9 8h8l3 8H6z" fill="#888" opacity="0.6" />
      <path d="M16 12l9 17H8z" fill="#f6c523" stroke="#222" />
      <path d="M16 17v6M16 25v2" stroke="#222" strokeWidth="1.600" />
    </svg>
    <svg width="24" height="16" viewBox="0 0 24 16" className="ml-[12px]">
      <rect x="1" y="1" width="20" height="14" fill="none" stroke="#fff" strokeWidth="1.200" />
      <rect x="3" y="3" width="15" height="10" fill="#fff" />
      <rect x="21" y="5" width="3" height="6" fill="#fff" />
    </svg>
    <svg width="24" height="26" viewBox="0 0 24 26" className="ml-[11px]" fill="none" stroke="#ddd" strokeWidth="1.200">
      <path d="M1 9h4l7-7v22l-7-7H1z" />
      <path d="M15 9c1 2 1 6 0 8M18 6c2 4 2 10 0 14" />
    </svg>
    <span className="ml-[15px] text-[17px]">ESP</span>
    <div className="ml-[15px] w-[100px] text-center text-[17.500px] leading-[28px]">
      <div>11:38 AM</div>
      <div>9/17/2020</div>
    </div>
    <div className="ml-auto mr-[40px] relative">
      <svg width="24" height="28" viewBox="0 0 24 28">
        <path d="M0 0h24v21H9l-7 6v-6H0z" fill="#fff" />
        <path d="M5 6h14M5 10h14M5 14h14" stroke="#444" />
      </svg>
      <div className="absolute left-[10px] top-[9px] w-[28px] h-[28px] rounded-full bg-[#444] border border-[#ccc] text-[17px] font-semibold flex items-center justify-center">14</div>
    </div>
  </div>
);

export default function App() {
  return (
    <div className="w-[1920px] h-[1080px] flex flex-col overflow-hidden bg-[#f4f7f9] font-['Open_Sans',sans-serif]">
      <div className="h-[34px] shrink-0 bg-white flex items-center">
        <div className="ml-[3px] w-[23px] h-[23px] rounded-full bg-[#75aadb] text-white text-[15px] flex items-center justify-center font-['Liberation_Serif',serif]">R</div>
        <span className="ml-[6px] text-[16.5px] text-[#222]">RStudio</span>
        <svg width="170" height="18" viewBox="0 0 170 18" className="ml-auto mr-[14px]" fill="none" stroke="#222" strokeWidth="1.100">
          <path d="M1 9h14" />
          <path d="M69 5h11v12H69zM72 5V2h11v12h-3" />
          <path d="M140 2l15 15M155 2l-15 15" />
        </svg>
      </div>
      <div className="h-[35px] shrink-0 bg-white flex items-center pl-[17px] text-[17px] text-[#111]">
        {menus.map(([first, rest, w]) => (
          <div key={first + rest} className={w}>
            <span className="underline underline-offset-2">{first}</span>
            {rest}
          </div>
        ))}
      </div>
      <MainToolbar />
      <div className="flex-1 min-h-0 flex pt-[13px] pb-[12px] pl-[14px] pr-[13px] gap-[12px]">
        <div className="w-[1230px] shrink-0 flex flex-col">
          <div className="h-[833px] flex flex-col">
            <EditorTabs />
            <EditorToolbar />
            <EditorBody />
            <StatusBar />
          </div>
          <div className="mt-[14px] h-[41px] flex items-center justify-between bg-[#e4e6e8] border border-t-2 border-b-2 border-[#d7dadd] rounded-t-[3px] pl-[12px] pr-[15px] pb-[2px]">
            <span className="text-[17px] font-bold text-[#111]">Console</span>
            <PaneIcons restore />
          </div>
        </div>
        <div className="flex-1 flex flex-col gap-[13px]">
          <EnvPane />
          <FilesPane />
        </div>
      </div>
      <Taskbar />
    </div>
  );
}
